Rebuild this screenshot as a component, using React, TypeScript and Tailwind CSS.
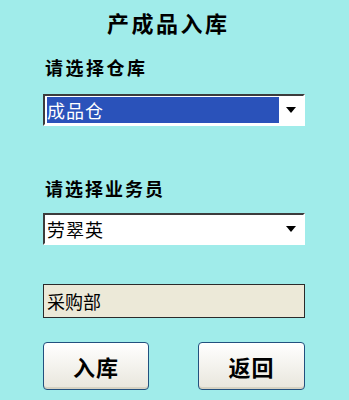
import React from 'react';

const font = { fontFamily: '"Noto Sans CJK SC", "Noto Sans", sans-serif' };

function Arrow() {
  return (
    <svg width="10" height="6" viewBox="0 0 10 6" className="block">
      <path d="M0 0h10L5 6z" fill="#000" />
    </svg>
  );
}

function Select({ value, active }: { value: string; active?: boolean }) {
  return (
    <div className="h-[32px] flex border-2 border-t-[#3c3c3c] border-l-[#3c3c3c] border-r-white border-b-white bg-white">
      <div className="flex-1 flex items-stretch py-[1px] pl-[2px]">
        <div
          className={`w-[232px] flex items-center text-[18px] leading-none tracking-[1px] ${
            active ? 'bg-[#2a52ba] text-white' : 'text-black'
          }`}
        >
          {value}
        </div>
      </div>
      <div className="w-[24px] flex items-center justify-center pr-[1px]">
        <Arrow />
      </div>
    </div>
  );
}

export default function App() {
  return (
    <div className="w-[349px] h-[400px] bg-[#a0ecea] overflow-hidden" style={font}>
      <div className="pt-[7px] h-[37px] flex items-center pl-[107px]">
        <h1 className="text-[22px] font-bold leading-none tracking-[2.5px] text-black">产成品入库</h1>
      </div>

      <div className="ml-[43px] w-[262px] flex flex-col">
        <div className="mt-[20px] h-[20px] flex items-center pl-[2px]">
          <p className="text-[18px] font-bold leading-none tracking-[2.5px] text-black">请选择仓库</p>
        </div>

        <div className="mt-[17px]">
          <Select value="成品仓" active />
        </div>

        <div className="mt-[52px] h-[20px] flex items-center pl-[2px]">
          <p className="text-[18px] font-bold leading-none tracking-[2px] text-black">请选择业务员</p>
        </div>

        <div className="mt-[15px]">
          <Select value="劳翠英" />
        </div>

        <div className="mt-[39px] h-[34px] border border-[#2b2b2b] bg-[#ece9d8] flex items-center pl-[3px]">
          <span className="text-[18px] leading-none text-black">采购部</span>
        </div>

        <div className="mt-[24px] flex justify-between">
          <button className="w-[106px] h-[48px] rounded-[4px] border border-[#22507e] bg-gradient-to-b from-white to-[#e8e6dc] text-[22px] font-bold leading-none tracking-[1px] text-black shadow-[inset_0_-2px_0_#d6d2c2]">
            入库
          </button>
          <button className="w-[107px] h-[48px] rounded-[4px] border border-[#22507e] bg-gradient-to-b from-white to-[#e8e6dc] text-[22px] font-bold leading-none tracking-[1px] text-black shadow-[inset_0_-2px_0_#d6d2c2]">
            返回
          </button>
        </div>
      </div>
    </div>
  );
}
